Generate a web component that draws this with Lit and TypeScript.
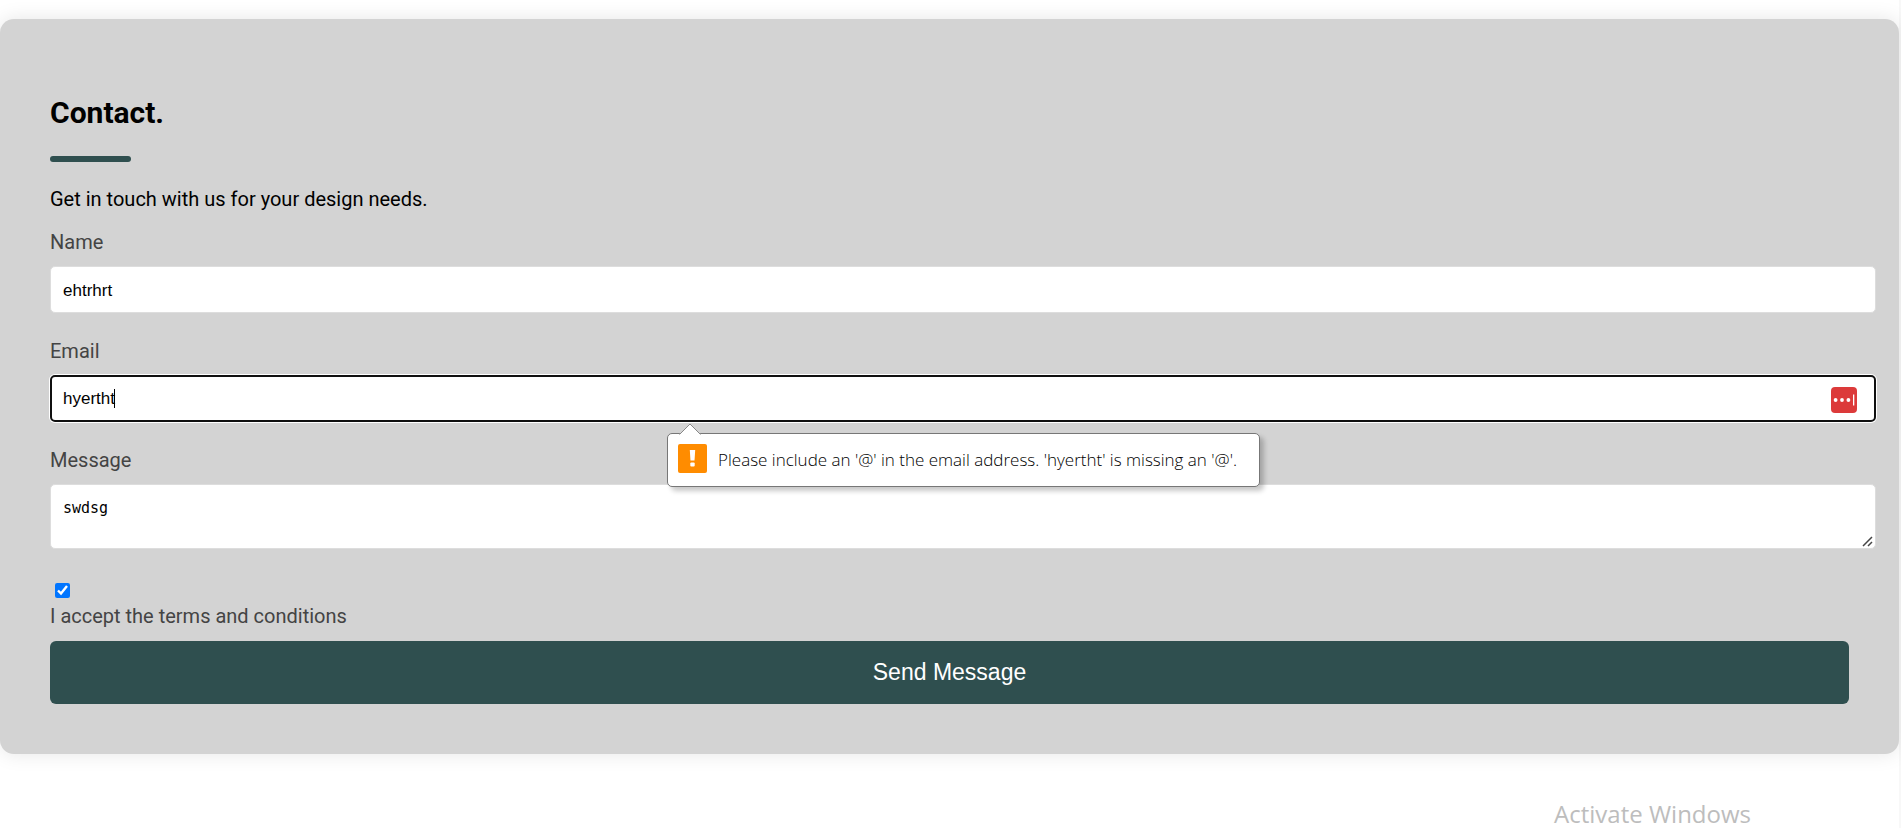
import { LitElement, html, css } from "lit";
import { customElement, state } from "lit/decorators.js";

@customElement("app-root")
export class AppRoot extends LitElement {
  @state() private name = "ehtrhrt";
  @state() private email = "hyertht";
  @state() private message = "swdsg";

  static styles = css`
    :host {
      display: block;
      box-sizing: border-box;
      min-height: 100vh;
      padding-top: 19px;
      border-right: 2px solid #f8f8f8;
      background: #fff;
      color: #000;
      font-family: Roboto, sans-serif;
      font-size: 20px;
      line-height: 24px;
    }
    .card {
      padding: 72px 50px 50px;
      border-radius: 14px;
      background: #d3d3d3;
      box-shadow: 0 0 20px rgba(0, 0, 0, 0.1);
    }
    h2 {
      margin: 0;
      font-size: 30px;
      line-height: 44px;
      font-weight: 700;
    }
    .rule {
      width: 81px;
      height: 6px;
      margin: 21px 0 25px;
      border-radius: 3px;
      background: #2f4f4f;
    }
    p {
      margin: 0 0 19px;
    }
    label {
      display: block;
      color: #444;
    }
    .field {
      position: relative;
      margin: 12px -27px 26px 0;
    }
    .control {
      display: block;
      box-sizing: border-box;
      width: 100%;
      margin: 0;
      padding: 13px 12px 11px;
      border: 1px solid #ddd;
      border-radius: 5px;
      background: #fff;
      color: #000;
      outline: none;
      font-family: "Liberation Sans", Arial, sans-serif;
      font-size: 17px;
      line-height: 21px;
    }
    input.control {
      height: 47px;
    }
    .active {
      padding: 12px 11px;
      border: 2px solid #101010;
      box-shadow: 0 0 0 1px #fff;
      caret-color: transparent;
    }
    textarea.control {
      height: 65px;
      resize: vertical;
      font-family: "DejaVu Sans Mono", monospace;
      font-size: 15px;
    }
    textarea::-webkit-resizer {
      background: transparent;
    }
    .grip {
      position: absolute;
      right: 3px;
      bottom: 2px;
      width: 11px;
      height: 11px;
      pointer-events: none;
    }
    .caret {
      position: absolute;
      left: 64px;
      top: 14px;
      width: 1px;
      height: 19px;
      background: #000;
    }
    .manager {
      position: absolute;
      right: 19px;
      top: 12px;
      display: block;
      width: 26px;
      height: 26px;
    }
    .bubble {
      position: absolute;
      z-index: 1;
      left: calc(50% - 296px);
      top: 58px;
      display: flex;
      align-items: center;
      gap: 11px;
      box-sizing: border-box;
      min-width: 593px;
      height: 54px;
      padding: 0 11px 0 10px;
      border: 1px solid #777;
      border-radius: 5px;
      background: #fff;
      box-shadow: 4px 4px 5px rgba(0, 0, 0, 0.22);
      color: #000;
      font-family: "Open Sans", sans-serif;
      font-size: 17px;
      font-weight: 300;
      white-space: nowrap;
    }
    .arrow {
      position: absolute;
      left: 11px;
      top: -11px;
      width: 22px;
      height: 12px;
    }
    .warn {
      width: 29px;
      height: 29px;
      margin-bottom: 4px;
    }
    .terms {
      margin-bottom: 13px;
    }
    .terms input {
      display: block;
      width: 15px;
      height: 15px;
      margin: 34px 0 6px 5px;
      accent-color: #0075ff;
    }
    button {
      display: block;
      width: 100%;
      height: 63px;
      border: 0;
      border-radius: 6px;
      background: #2f4f4f;
      color: #fff;
      font-family: "Liberation Sans", Arial, sans-serif;
      font-size: 23px;
    }
    .watermark {
      margin: 46px 148px 0 0;
      text-align: right;
      color: #bdbdbd;
      font-family: "Open Sans", sans-serif;
      font-size: 24px;
      line-height: 28px;
    }
  `;

  render() {
    return html`
      <section class="card">
        <h2>Contact.</h2>
        <div class="rule"></div>
        <p>Get in touch with us for your design needs.</p>
        <form novalidate @submit=${(e: Event) => e.preventDefault()}>
          <label for="name">Name</label>
          <div class="field">
            <input class="control" id="name" type="text" .value=${this.name} />
          </div>
          <label for="email">Email</label>
          <div class="field">
            <input class="control active" id="email" type="email" aria-describedby="hint" .value=${this.email} />
            <span class="caret"></span>
            <svg class="manager" viewBox="0 0 26 26" aria-hidden="true">
              <rect width="26" height="26" rx="4" fill="#dc3a3a" />
              <circle cx="4.6" cy="13" r="1.9" fill="#fff" />
              <circle cx="11" cy="13" r="1.9" fill="#fff" />
              <circle cx="17.4" cy="13" r="1.9" fill="#fff" />
              <rect x="22" y="7.5" width="1.3" height="11" fill="#fff" />
            </svg>
            <div class="bubble" id="hint" role="alert">
              <svg class="arrow" viewBox="0 0 22 12" aria-hidden="true">
                <path d="M0 12V11.5L11 1L22 11.5V12Z" fill="#fff" />
                <path d="M0.5 11.5L11 1L21.5 11.5" fill="none" stroke="#888" />
              </svg>
              <svg class="warn" viewBox="0 0 29 29" aria-hidden="true">
                <rect width="29" height="29" rx="2" fill="#ff8c00" />
                <path d="M11.8 6H17.2L16.5 16.5H12.5Z" fill="#fff" />
                <rect x="12.3" y="18.5" width="4.4" height="4" rx="1" fill="#fff" />
              </svg>
              <span>Please include an '@' in the email address. '${this.email}' is missing an '@'.</span>
            </div>
          </div>
          <label for="message">Message</label>
          <div class="field">
            <textarea class="control" id="message" rows="2" .value=${this.message}></textarea>
            <svg class="grip" viewBox="0 0 11 11" aria-hidden="true">
              <path d="M1 10L10 1M6 10L10 6" fill="none" stroke="#444" stroke-width="1.5" />
            </svg>
          </div>
          <div class="terms">
            <input id="terms" type="checkbox" checked />
            <label for="terms">I accept the terms and conditions</label>
          </div>
          <button type="submit">Send Message</button>
        </form>
      </section>
      <div class="watermark">Activate Windows</div>
    `;
  }
}
